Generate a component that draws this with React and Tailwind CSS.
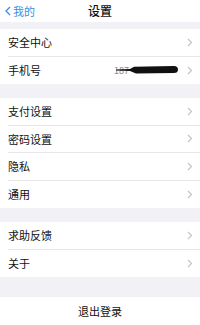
import React from 'react';

const font = { fontFamily: '"Noto Sans CJK SC", "Noto Sans", sans-serif' };

function Chevron() {
  return (
    <svg width="6" height="9" viewBox="0 0 6 9" className="shrink-0">
      <path d="M1 1l3.5 3.5L1 8" fill="none" stroke="#c4c4c9" strokeWidth="1.2" />
    </svg>
  );
}

function Row({ label, last, children }) {
  return (
    <div className="pl-2">
      <div className={`h-[27.5px] flex items-center pr-[7px] ${last ? '' : 'border-b border-[#e6e6ea]'}`}>
        <span className="flex-1 text-[11px] text-[#111]">{label}</span>
        {children}
        <Chevron />
      </div>
    </div>
  );
}

function Section({ items, className = '' }) {
  return (
    <div className={`bg-white ${className}`}>
      {items.map((it, i) => (
        <Row key={it} label={it} last={i === items.length - 1} />
      ))}
    </div>
  );
}

export default function App() {
  return (
    <div className="w-[200px] h-[325px] bg-[#f2f2f6] overflow-hidden" style={font}>
      <div className="h-[22px] bg-white flex items-center relative">
        <div className="flex items-center gap-[2px] pl-[5px] text-[#3a8ee6] text-[11px]">
          <svg width="6" height="10" viewBox="0 0 6 10">
            <path d="M5 1L1 5l4 4" fill="none" stroke="#3a8ee6" strokeWidth="1.3" />
          </svg>
          <span>我的</span>
        </div>
        <span className="absolute left-0 right-0 text-center text-[12px] font-medium text-[#111]">设置</span>
      </div>

      <div className="bg-white mt-[7px]">
        <Row label="安全中心" />
        <Row label="手机号" last>
          <div className="relative w-[67px] h-[10px] mr-[8px]">
            <span className="absolute left-[2px] top-[1px] text-[9px] text-[#8a8a8a] leading-none">187</span>
            <svg width="67" height="10" viewBox="0 0 67 10" className="absolute inset-0">
              <path d="M4 4.6 L18 4 L22 1.8 L62 1 Q66 1 66 4.5 Q66 8 62 8 L24 8.5 L18 6 L4 5.4 Z" fill="#111" />
            </svg>
          </div>
        </Row>
      </div>

      <Section items={['支付设置', '密码设置', '隐私', '通用']} className="mt-[14px]" />
      <Section items={['求助反馈', '关于']} className="mt-[14px]" />

      <div className="bg-white mt-[20px] h-[28px] flex items-center justify-center text-[11px] text-[#111]">
        退出登录
      </div>
    </div>
  );
}
